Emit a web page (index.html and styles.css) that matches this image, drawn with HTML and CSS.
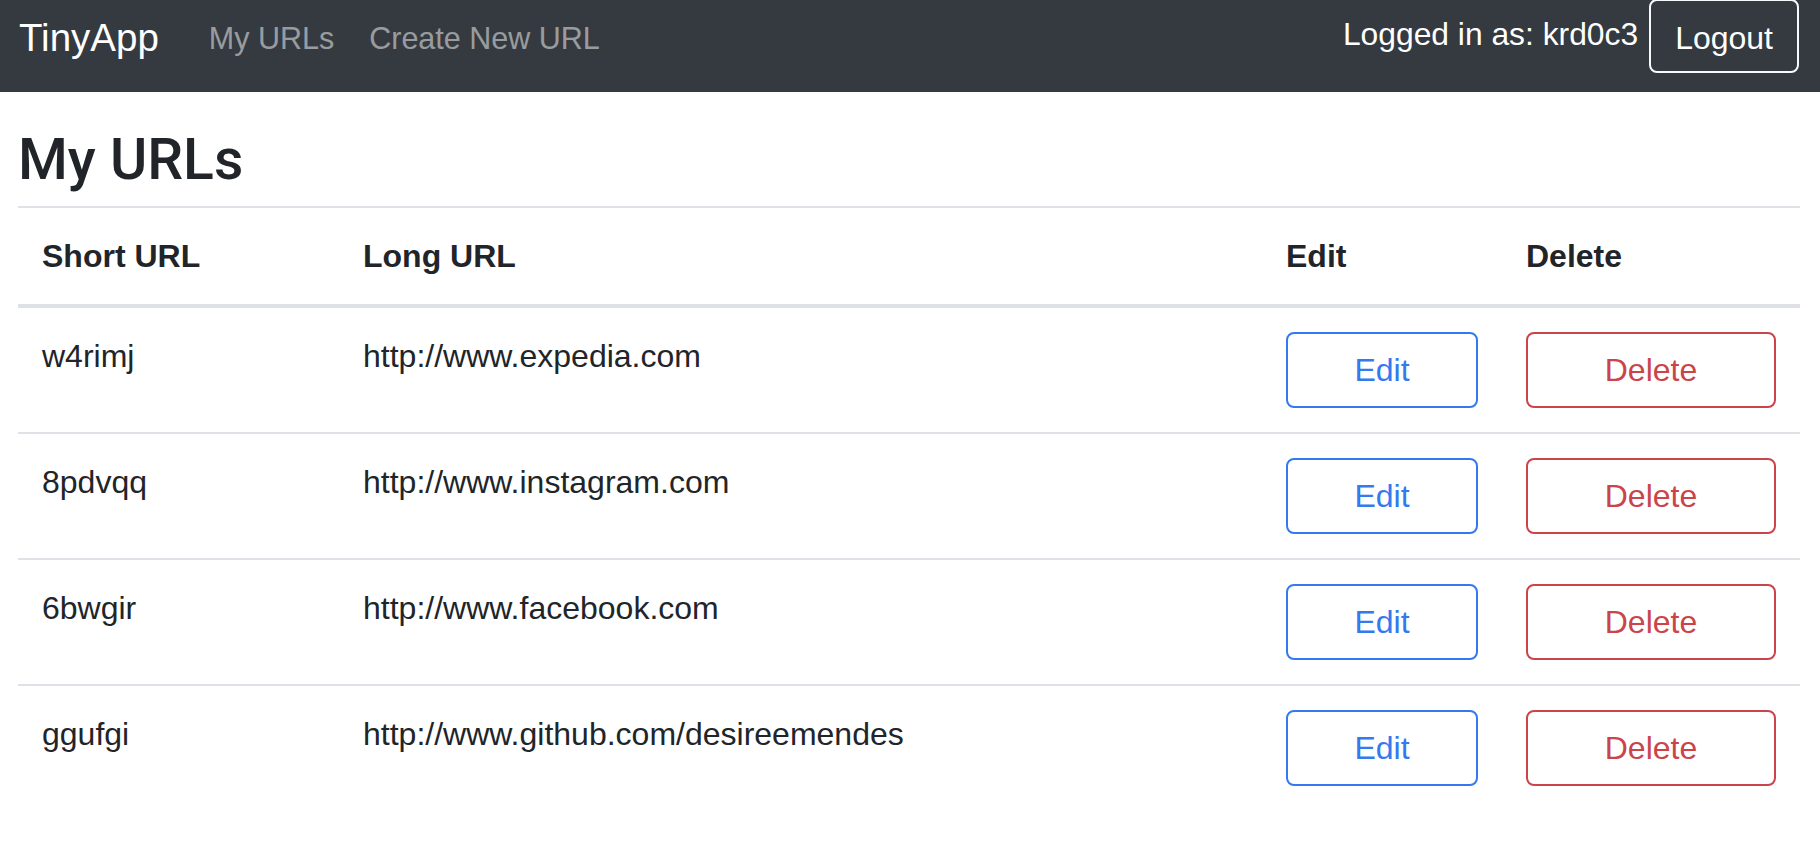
FILE: index.html
```html
<!DOCTYPE html>
<html lang="en">
<head>
<meta charset="utf-8">
<title>TinyApp</title>
<link rel="stylesheet" href="styles.css">
</head>
<body>
<nav class="navbar">
  <div class="nav-left">
    <a class="brand" href="#">TinyApp</a>
    <a class="nav-link" href="#">My URLs</a>
    <a class="nav-link" href="#">Create New URL</a>
  </div>
  <div class="nav-right">
    <span class="logged">Logged in as: krd0c3</span>
    <button class="btn-logout" type="button">Logout</button>
  </div>
</nav>
<main class="main">
  <h1 class="title">My URLs</h1>
  <table class="table">
    <colgroup>
      <col class="c-short">
      <col class="c-long">
      <col class="c-edit">
      <col class="c-del">
    </colgroup>
    <thead>
      <tr><th>Short URL</th><th>Long URL</th><th>Edit</th><th>Delete</th></tr>
    </thead>
    <tbody>
      <tr>
        <td>w4rimj</td><td>http://www.expedia.com</td>
        <td><button class="btn btn-edit">Edit</button></td>
        <td><button class="btn btn-del">Delete</button></td>
      </tr>
      <tr>
        <td>8pdvqq</td><td>http://www.instagram.com</td>
        <td><button class="btn btn-edit">Edit</button></td>
        <td><button class="btn btn-del">Delete</button></td>
      </tr>
      <tr>
        <td>6bwgir</td><td>http://www.facebook.com</td>
        <td><button class="btn btn-edit">Edit</button></td>
        <td><button class="btn btn-del">Delete</button></td>
      </tr>
      <tr>
        <td>ggufgi</td><td>http://www.github.com/desireemendes</td>
        <td><button class="btn btn-edit">Edit</button></td>
        <td><button class="btn btn-del">Delete</button></td>
      </tr>
    </tbody>
  </table>
</main>
</body>
</html>
```

FILE: styles.css
```css
* { box-sizing: border-box; }
html, body {
  margin: 0;
  padding: 0;
  background: #fff;
  color: #212529;
  font-family: "Liberation Sans", Arial, sans-serif;
}
.navbar {
  height: 92px;
  background: #343a40;
  display: flex;
  justify-content: space-between;
  align-items: flex-start;
  padding: 0 21px 0 19px;
}
.nav-left {
  display: flex;
  align-items: flex-start;
}
.brand {
  color: #fff;
  text-decoration: none;
  font-size: 38.5px;
  line-height: 57px;
  margin-top: 9px;
  margin-right: 50px;
}
.nav-link {
  color: rgba(255, 255, 255, 0.5);
  text-decoration: none;
  font-size: 30.5px;
  line-height: 48px;
  margin-top: 14px;
  margin-right: 35px;
}
.nav-right {
  display: flex;
  align-items: flex-start;
  gap: 11px;
}
.logged {
  color: #fff;
  font-size: 31.8px;
  line-height: 48px;
  margin-top: 10px;
}
.btn-logout {
  margin-top: -1px;
  background: transparent;
  color: #fff;
  border: 2px solid #f8f9fa;
  border-radius: 8px;
  font-family: inherit;
  font-size: 32px;
  line-height: 46px;
  padding: 14px 24px 10px;
}
.main {
  padding: 35px 20px 0 18px;
}
.title {
  margin: 0 0 13px;
  font-family: Roboto, "Liberation Sans", Arial, sans-serif;
  font-size: 57px;
  font-weight: 500;
  line-height: 66px;
}
.table {
  width: 100%;
  border-collapse: collapse;
  table-layout: fixed;
  font-size: 32px;
  line-height: 48px;
}
.c-short { width: 321px; }
.c-long { width: 923px; }
.c-edit { width: 240px; }
.c-del { width: 298px; }
.table th {
  text-align: left;
  font-weight: 700;
  padding: 24px;
  vertical-align: bottom;
  border-top: 2px solid #dee2e6;
  border-bottom: 4px solid #dee2e6;
}
.table td {
  padding: 24px;
  vertical-align: top;
  border-top: 2px solid #dee2e6;
}
.btn {
  display: block;
  width: 100%;
  background: #fff;
  font-family: inherit;
  font-size: 32px;
  line-height: 48px;
  padding: 12px 24px;
  border-radius: 8px;
  border: 2px solid;
  text-align: center;
}
.btn-edit {
  color: #3479f0;
  border-color: #3479f0;
}
.btn-del {
  color: #cb444a;
  border-color: #cb444a;
}
```
